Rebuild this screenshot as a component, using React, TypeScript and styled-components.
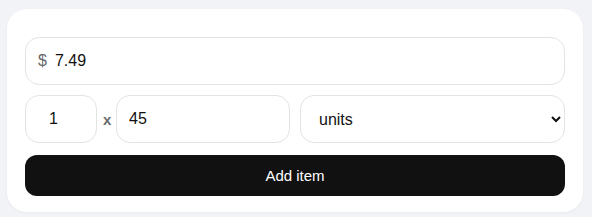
import styled, { createGlobalStyle } from 'styled-components';
import { useState } from 'react';

const GlobalStyle = createGlobalStyle`
  html, body {
    margin: 0;
    background: #f2f3f7;
    font-family: "Liberation Sans", Arial, sans-serif;
  }
`;

const App = () => {
  const [price, setPrice] = useState('7.49');
  const [qty, setQty] = useState('1');
  const [amount, setAmount] = useState('45');
  const [unit, setUnit] = useState('units');

  return (
    <>
      <GlobalStyle />
      <Page>
        <Card>
          <PriceBox>
            <Currency>$</Currency>
            <BareInput value={price} onChange={e => setPrice(e.target.value)} />
          </PriceBox>
          <Row>
            <Multiplier>
              <QtyInput type="number" value={qty} onChange={e => setQty(e.target.value)} />
              <Times>x</Times>
              <Field type="number" value={amount} onChange={e => setAmount(e.target.value)} />
            </Multiplier>
            <Select value={unit} onChange={e => setUnit(e.target.value)}>
              <option value="units">units</option>
              <option value="g">g</option>
              <option value="kg">kg</option>
              <option value="ml">ml</option>
              <option value="l">l</option>
            </Select>
          </Row>
          <AddButton>Add item</AddButton>
        </Card>
      </Page>
    </>
  );
};

const Page = styled.div`
  padding: 9px 9px 5px 7px;
`;

const Card = styled.div`
  background: #fff;
  border-radius: 20px;
  padding: 28px 18px 16px;
  display: flex;
  flex-direction: column;
  box-shadow: 0 1px 3px rgba(20, 20, 40, 0.04);
`;

const PriceBox = styled.label`
  display: flex;
  align-items: center;
  gap: 8px;
  height: 48px;
  box-sizing: border-box;
  border: 1px solid #e3e3e3;
  border-radius: 14px;
  padding: 0 12px;
`;

const Currency = styled.span`
  color: #666;
  font-size: 16px;
`;

const BareInput = styled.input`
  flex: 1;
  border: none;
  outline: none;
  font: inherit;
  font-size: 16px;
  color: #111;
  padding: 0;
  background: transparent;
`;

const Row = styled.div`
  display: grid;
  grid-template-columns: minmax(0, 1fr) minmax(0, 1fr);
  gap: 10px;
  margin-top: 10px;
`;

const Multiplier = styled.div`
  display: flex;
  align-items: center;
  gap: 6px;
  min-width: 0;
`;

const Field = styled.input`
  flex: 1;
  min-width: 0;
  height: 48px;
  box-sizing: border-box;
  border: 1px solid #e3e3e3;
  border-radius: 14px;
  padding: 0 12px;
  font: inherit;
  font-size: 16px;
  color: #111;
  outline: none;
`;

const QtyInput = styled(Field)`
  flex: 0 0 72px;
  text-align: center;
`;

const Times = styled.span`
  color: #6b6b6b;
  font-size: 15px;
  font-weight: bold;
  width: 7px;
  text-align: center;
`;

const Select = styled.select`
  width: 100%;
  min-width: 0;
  height: 48px;
  box-sizing: border-box;
  border: 1px solid #e3e3e3;
  border-radius: 14px;
  padding: 0 4px 0 14px;
  font: inherit;
  font-size: 16px;
  color: #111;
  background: #fff;
  outline: none;
`;

const AddButton = styled.button`
  margin-top: 12px;
  height: 41px;
  border: none;
  border-radius: 12px;
  background: #111;
  color: #fff;
  font: inherit;
  font-size: 15px;
  cursor: pointer;
`;

export default App;
